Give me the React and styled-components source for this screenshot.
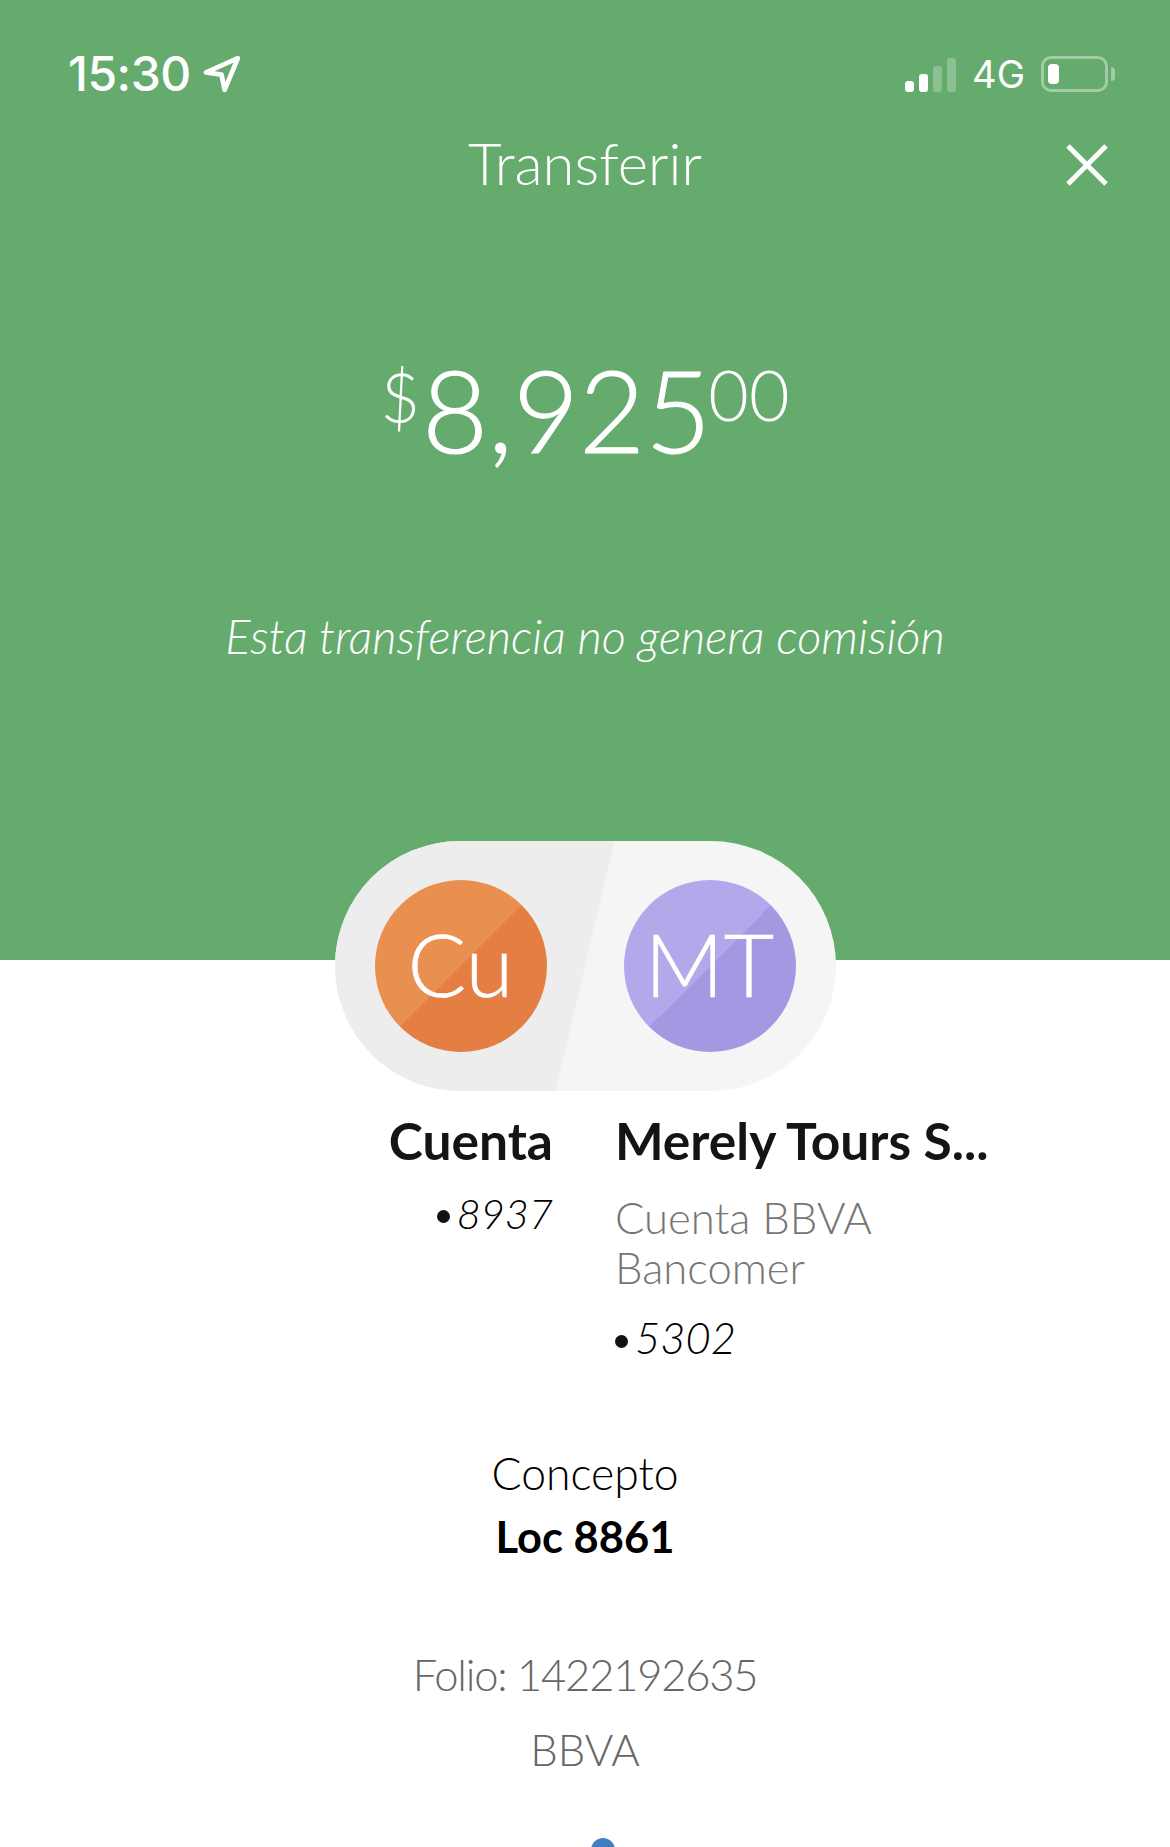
import React from "react";
import styled, { createGlobalStyle } from "styled-components";

const Global = createGlobalStyle`
  html, body { margin: 0; padding: 0; background: #fff; }
  body { font-family: "Lato", "Liberation Sans", sans-serif; }
  * { box-sizing: border-box; }
`;

const Page = styled.div`
  width: 1170px;
  height: 1847px;
  overflow: hidden;
  background: #fff;
  display: flex;
  flex-direction: column;
  align-items: center;
`;

const Hero = styled.header`
  width: 100%;
  height: 960px;
  background: #65ab6e;
  color: #fff;
  display: flex;
  flex-direction: column;
  flex: none;
`;

const StatusBar = styled.div`
  height: 100px;
  padding: 52px 62px 0 68px;
  display: flex;
  justify-content: space-between;
  align-items: flex-start;
  font-family: "Inter", sans-serif;
`;

const StatusGroup = styled.div`
  display: flex;
  align-items: center;
  height: 44px;
  gap: ${(p) => p.$gap}px;
`;

const Clock = styled.span`
  font-size: 48px;
  font-weight: 500;
  line-height: 44px;
  letter-spacing: -0.5px;
`;

const Network = styled.span`
  font-size: 38px;
  font-weight: 400;
  line-height: 44px;
`;

const Signal = styled.div`
  display: flex;
  align-items: flex-end;
  gap: 5px;
  height: 35px;
`;

const Bar = styled.i`
  display: block;
  width: 9px;
  height: ${(p) => p.$h}px;
  border-radius: 3px;
  background: ${(p) => (p.$on ? "#fff" : "rgba(255,255,255,.25)")};
`;

const Battery = styled.div`
  position: relative;
  width: 67px;
  height: 36px;
  border: 3px solid rgba(255, 255, 255, 0.4);
  border-radius: 10px;
  padding: 5px 4px;
  &::after {
    content: "";
    position: absolute;
    left: 67px;
    top: 8px;
    width: 4px;
    height: 14px;
    border-radius: 0 4px 4px 0;
    background: rgba(255, 255, 255, 0.4);
  }
`;

const Charge = styled.div`
  width: 11px;
  height: 100%;
  border-radius: 4px;
  background: #fff;
`;

const TitleRow = styled.div`
  height: 126px;
  padding: 0 62px;
  display: grid;
  grid-template-columns: 1fr auto 1fr;
  align-items: center;
`;

const Title = styled.h1`
  grid-column: 2;
  margin: 0;
  font-size: 58px;
  font-weight: 300;
  line-height: 60px;
`;

const Close = styled.svg`
  grid-column: 3;
  justify-self: end;
  width: 42px;
  height: 42px;
  margin-top: 4px;
`;

const Amount = styled.div`
  margin-top: 118px;
  display: flex;
  justify-content: center;
  align-items: flex-start;
  font-weight: 300;
`;

const Currency = styled.span`
  font-size: 68px;
  line-height: 80px;
  margin: 13px 2px 0 0;
`;

const Whole = styled.span`
  font-size: 114px;
  line-height: 130px;
  -webkit-text-stroke: 1px #fff;
`;

const Cents = styled.span`
  font-size: 70px;
  line-height: 80px;
  margin: 10px 0 0 -3px;
`;

const Note = styled.p`
  margin: 135px 0 0;
  text-align: center;
  font-size: 47px;
  font-weight: 300;
  font-style: italic;
  line-height: 54px;
`;

const Pill = styled.div`
  position: relative;
  flex: none;
  width: 501px;
  height: 250px;
  margin-top: -119px;
  border-radius: 125px;
  overflow: hidden;
  background: #f5f5f5;
  padding: 39px 40px 0;
  display: flex;
  justify-content: space-between;
  align-items: flex-start;
  &::before {
    content: "";
    position: absolute;
    inset: 0;
    background: #ededed;
    clip-path: polygon(0 0, 280px 0, 221px 100%, 0 100%);
  }
`;

const Avatar = styled.div`
  position: relative;
  width: 172px;
  height: 172px;
  padding-bottom: 6px;
  border-radius: 50%;
  background: linear-gradient(135deg, ${(p) => p.$light} 50%, ${(p) => p.$dark} 50%);
  color: #fff;
  display: flex;
  align-items: center;
  justify-content: center;
  font-size: 87px;
  font-weight: 300;
  -webkit-text-stroke: 0.6px #fff;
`;

const Parties = styled.section`
  flex: none;
  width: 100%;
  margin-top: 19px;
  display: grid;
  grid-template-columns: 553px 1fr;
  column-gap: 62px;
`;

const Party = styled.div`
  display: flex;
  flex-direction: column;
  align-items: ${(p) => (p.$end ? "flex-end" : "flex-start")};
`;

const Name = styled.div`
  font-size: 51.5px;
  font-weight: 700;
  line-height: 60px;
  color: #141414;
`;

const Bank = styled.div`
  width: 300px;
  margin-top: 22px;
  font-size: 43.6px;
  font-weight: 300;
  line-height: 50px;
  color: #767676;
`;

const Mask = styled.div`
  margin-top: ${(p) => p.$top}px;
  font-size: ${(p) => p.$size}px;
  font-weight: 300;
  font-style: italic;
  line-height: 50px;
  color: #000;
  white-space: nowrap;
`;

const Dot = styled.span`
  display: inline-block;
  width: 13px;
  height: 13px;
  margin-right: 7px;
  border-radius: 50%;
  background: #111;
  vertical-align: 6px;
`;

const Concept = styled.section`
  flex: none;
  margin-top: 79px;
  text-align: center;
`;

const ConceptLabel = styled.div`
  font-size: 44.5px;
  font-weight: 300;
  line-height: 64px;
  color: #000;
`;

const ConceptValue = styled.div`
  font-size: 43.5px;
  font-weight: 700;
  line-height: 62px;
  color: #000;
`;

const Meta = styled.div`
  flex: none;
  margin-top: ${(p) => p.$top}px;
  font-size: 43.5px;
  font-weight: 300;
  line-height: 50px;
  letter-spacing: ${(p) => p.$track || 0}px;
  color: #666;
  text-align: center;
`;

const Pager = styled.div`
  flex: none;
  width: 24px;
  height: 24px;
  margin-top: 64px;
  margin-left: 35px;
  border-radius: 50%;
  background: #3f7fc4;
`;

export default function App() {
  return (
    <Page>
      <Global />
      <Hero>
        <StatusBar>
          <StatusGroup $gap={12}>
            <Clock>15:30</Clock>
            <svg width="38" height="38" viewBox="0 0 36 36" fill="none" stroke="#fff" strokeWidth="4.5" strokeLinejoin="round">
              <path d="M33 3 3 16.5 17.5 18.5 20.5 33Z" />
            </svg>
          </StatusGroup>
          <StatusGroup $gap={16}>
            <Signal>
              <Bar $on $h={11} />
              <Bar $on $h={18} />
              <Bar $h={26} />
              <Bar $h={34} />
            </Signal>
            <Network>4G</Network>
            <Battery>
              <Charge />
            </Battery>
          </StatusGroup>
        </StatusBar>
        <TitleRow>
          <Title>Transferir</Title>
          <Close viewBox="0 0 42 42" fill="none" stroke="#fff" strokeWidth="5">
            <path d="M2 2 40 40M40 2 2 40" />
          </Close>
        </TitleRow>
        <Amount>
          <Currency>$</Currency>
          <Whole>8,925</Whole>
          <Cents>00</Cents>
        </Amount>
        <Note>Esta transferencia no genera comisión</Note>
      </Hero>
      <Pill>
        <Avatar $light="#e98f4f" $dark="#e57e42">Cu</Avatar>
        <Avatar $light="#b3a9ea" $dark="#a498e2">MT</Avatar>
      </Pill>
      <Parties>
        <Party $end>
          <Name>Cuenta</Name>
          <Mask $top={18} $size={41.5}><Dot />8937</Mask>
        </Party>
        <Party>
          <Name>Merely Tours S...</Name>
          <Bank>Cuenta BBVA Bancomer</Bank>
          <Mask $top={20} $size={43.5}><Dot />5302</Mask>
        </Party>
      </Parties>
      <Concept>
        <ConceptLabel>Concepto</ConceptLabel>
        <ConceptValue>Loc 8861</ConceptValue>
      </Concept>
      <Meta $top={82} $track={-1.2}>Folio: 1422192635</Meta>
      <Meta $top={25}>BBVA</Meta>
      <Pager />
    </Page>
  );
}
